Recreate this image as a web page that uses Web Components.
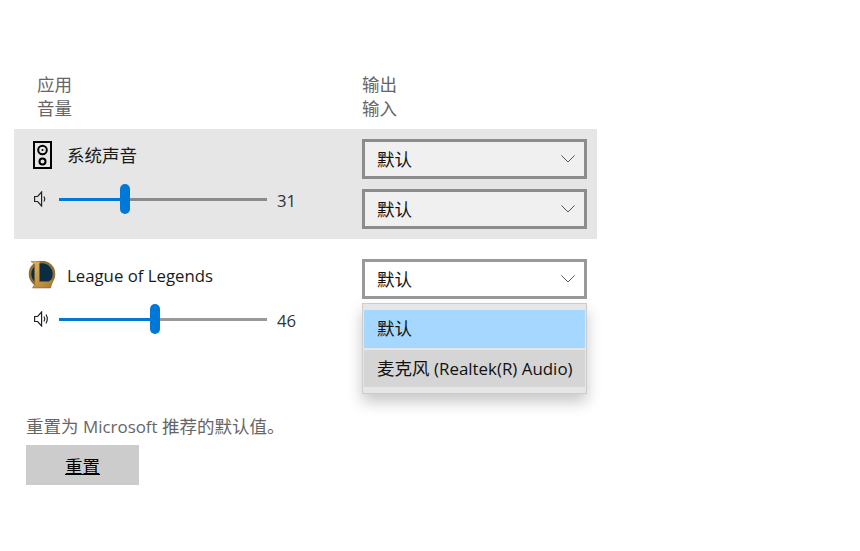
<!DOCTYPE html>
<html lang="zh">
<head>
<meta charset="utf-8">
<title>应用音量</title>
<style>
    html, body {
        margin: 0;
        background: #ffffff;
        font-family: "Open Sans", "Noto Sans CJK SC", sans-serif;
        font-size: 17.5px;
        color: #1a1a1a;
    }

    .latin {
        font-size: 16.9px;
    }

    .cjk-label {
        padding-bottom: 2px;
    }
</style>
</head>
<body>

<template id="template-volume">
    <svg class="icon" width="14" height="16" viewBox="0 0 14 16" fill="none" stroke="#222222" stroke-width="1.2">
        <path d="M0.6 5.5h3l4-4.5v14l-4-4.5h-3z"/>
        <path class="wave-a" d="M10 5.5q1.6 2.5 0 5"/>
        <path class="wave-b" d="M12 3.5q2.6 4.5 0 9"/>
    </svg>
    <div class="track">
        <div class="fill"></div>
        <div class="thumb"></div>
        <div class="rest"></div>
    </div>
    <span class="value"></span>
    <style>
        :host {
            display: flex;
            align-items: center;
            height: 30px;
            padding-left: 6px;
            --rest-color: #999999;
        }

        .icon {
            width: 14px;
            margin-right: 11px;
            flex: none;
        }

        .track {
            display: flex;
            align-items: center;
            width: 208px;
            height: 30px;
            flex: none;
        }

        .fill {
            height: 3px;
            background: #0078d7;
        }

        .rest {
            height: 3px;
            background: var(--rest-color);
        }

        .thumb {
            width: 10px;
            height: 30px;
            border-radius: 5px;
            background: #0078d7;
            flex: none;
        }

        .value {
            margin-left: 10px;
            padding-top: 2px;
            font-size: 16.7px;
            color: #333333;
        }
    </style>
</template>

<template id="template-row">
    <div class="left">
        <div class="name">
            <span class="icon"><slot name="icon"></slot></span>
            <slot name="label"></slot>
        </div>
        <slot name="volume"></slot>
    </div>
    <div class="right">
        <slot></slot>
    </div>
    <style>
        :host {
            display: flex;
            box-sizing: border-box;
            width: 583px;
            height: 110px;
            padding-top: 10px;
        }

        :host([active]) {
            background: #e6e6e6;
        }

        .left {
            display: flex;
            flex-direction: column;
            gap: 13px;
            box-sizing: border-box;
            width: 348px;
            padding-left: 14px;
        }

        .name {
            display: flex;
            align-items: center;
            gap: 11px;
            height: 32px;
        }

        .icon {
            display: flex;
            justify-content: center;
            width: 28px;
        }

        .right {
            display: flex;
            flex-direction: column;
            gap: 10px;
        }
    </style>
</template>

<template id="template-select">
    <div class="box">
        <span class="current"></span>
        <svg width="14" height="8" viewBox="0 0 14 8" fill="none" stroke="#555555" stroke-width="1">
            <path d="M0.4 0.4l6.6 6.6l6.6-6.6"/>
        </svg>
    </div>
    <div class="menu"><slot></slot></div>
    <style>
        :host {
            display: block;
            position: relative;
            width: 225px;
            height: 40px;
            --select-border: #999999;
            --select-bg: #ffffff;
        }

        .box {
            display: flex;
            align-items: center;
            justify-content: space-between;
            box-sizing: border-box;
            height: 40px;
            padding: 0 9px 0 12px;
            border: 3px solid var(--select-border);
            background: var(--select-bg);
            color: #111111;
        }

        .current {
            padding-bottom: 2px;
        }

        .menu {
            display: none;
            position: absolute;
            top: 44px;
            left: 0;
            right: 0;
            z-index: 2;
            flex-direction: column;
            gap: 2px;
            box-sizing: border-box;
            height: 91px;
            padding: 6px 1px;
            border: 1px solid #cccccc;
            background: #e6e6e6;
            box-shadow: 0 8px 14px rgba(0, 0, 0, 0.22);
        }

        :host([open]) .menu {
            display: flex;
        }
    </style>
</template>

<template id="template-option">
    <span><slot></slot></span>
    <style>
        :host {
            display: flex;
            align-items: center;
            height: 38px;
            padding-left: 13px;
            color: #111111;
            white-space: nowrap;
        }

        span {
            padding-bottom: 2px;
        }

        :host([selected]) {
            background: #a6d8ff;
        }

        :host([hover]) {
            background: #d5d5d5;
        }
    </style>
</template>

<template id="template-reset">
    <p><slot></slot></p>
    <button><slot name="action"></slot></button>
    <style>
        :host {
            display: block;
            margin: 55px 0 0 26px;
        }

        p {
            height: 24px;
            margin: 0 0 7px;
            line-height: 24px;
            color: #666666;
        }

        button {
            display: block;
            width: 113px;
            height: 40px;
            padding: 0;
            border: 0;
            background: #cccccc;
            color: #000000;
            font: inherit;
            text-decoration: underline;
        }
    </style>
</template>

<template id="template-page">
    <header>
        <div class="col-a"><span>应用</span><span>音量</span></div>
        <div class="col-b"><span>输出</span><span>输入</span></div>
    </header>
    <div class="rows"><slot></slot></div>
    <slot name="footer"></slot>
    <style>
        :host {
            display: block;
            padding-top: 72px;
        }

        header {
            display: flex;
            height: 48px;
            margin-bottom: 9px;
            line-height: 24px;
            color: #666666;
        }

        .col-a, .col-b {
            display: flex;
            flex-direction: column;
        }

        .col-a {
            width: 325px;
            padding-left: 37px;
        }

        .rows {
            display: flex;
            flex-direction: column;
            gap: 10px;
            margin-left: 14px;
        }
    </style>
</template>

<sound-page>
    <app-row active>
        <svg slot="icon" width="19" height="28" viewBox="0 0 19 28" fill="none" stroke="#000000">
            <rect x="1" y="1" width="17" height="26" stroke-width="2"/>
            <circle cx="9.500" cy="9" r="4.300" stroke-width="2"/>
            <circle cx="9.500" cy="9" r="1" fill="#000000" stroke="none"/>
            <circle cx="9.500" cy="20.500" r="3" stroke-width="2"/>
        </svg>
        <span slot="label" class="cjk-label">系统声音</span>
        <vol-slider slot="volume" value="31" waves="1" style="--rest-color: #8a8a8a"></vol-slider>
        <audio-select label="默认" style="--select-border: #8c8c8c; --select-bg: #f0f0f0"></audio-select>
        <audio-select label="默认" style="--select-border: #8c8c8c; --select-bg: #f0f0f0"></audio-select>
    </app-row>
    <app-row>
        <svg slot="icon" width="28" height="28" viewBox="0 0 28 28">
            <defs>
                <linearGradient id="lol-gold" x1="0" y1="0" x2="1" y2="1">
                    <stop offset="0" stop-color="#e0b565"/>
                    <stop offset="1" stop-color="#a87a2e"/>
                </linearGradient>
            </defs>
            <circle cx="14" cy="13" r="12" fill="#0c2c44" stroke="#8d7238" stroke-width="2.600"/>
            <path d="M3 0.500h10l-1.500 2v18h9l5-3l-3 9.500h-18l2-3.500v-20.500z" fill="url(#lol-gold)" stroke="#7b5a26" stroke-width="0.500"/>
        </svg>
        <span slot="label" class="latin" style="font-size: 16.8px">League of Legends</span>
        <vol-slider slot="volume" value="46" waves="2"></vol-slider>
        <audio-select label="默认" open>
            <audio-option selected>默认</audio-option>
            <audio-option hover>麦克风 <span class="latin">(Realtek(R) Audio)</span></audio-option>
        </audio-select>
    </app-row>
    <reset-panel slot="footer">
        重置为 <span class="latin">Microsoft</span> 推荐的默认值。
        <span slot="action">重置</span>
    </reset-panel>
</sound-page>

<script>
    const fromTemplate = (el, id) => {
        const template = document.getElementById(id).content;
        el.shadow = el.attachShadow({ mode: 'open' });
        el.shadow.appendChild(template.cloneNode(true));
    };

    customElements.define('vol-slider', class extends HTMLElement {
        constructor() {
            super();
            fromTemplate(this, 'template-volume');
        }
        connectedCallback() {
            const value = +this.getAttribute('value');
            this.shadow.querySelector('.fill').style.flex = value;
            this.shadow.querySelector('.rest').style.flex = 100 - value;
            this.shadow.querySelector('.value').textContent = value;
            if (this.getAttribute('waves') === '1') {
                this.shadow.querySelector('.wave-b').remove();
            }
        }
    });

    customElements.define('app-row', class extends HTMLElement {
        constructor() {
            super();
            fromTemplate(this, 'template-row');
        }
    });

    customElements.define('audio-select', class extends HTMLElement {
        constructor() {
            super();
            fromTemplate(this, 'template-select');
        }
        connectedCallback() {
            this.shadow.querySelector('.current').textContent = this.getAttribute('label');
        }
    });

    customElements.define('audio-option', class extends HTMLElement {
        constructor() {
            super();
            fromTemplate(this, 'template-option');
        }
    });

    customElements.define('reset-panel', class extends HTMLElement {
        constructor() {
            super();
            fromTemplate(this, 'template-reset');
        }
    });

    customElements.define('sound-page', class extends HTMLElement {
        constructor() {
            super();
            fromTemplate(this, 'template-page');
        }
    });
</script>
</body>
</html>
